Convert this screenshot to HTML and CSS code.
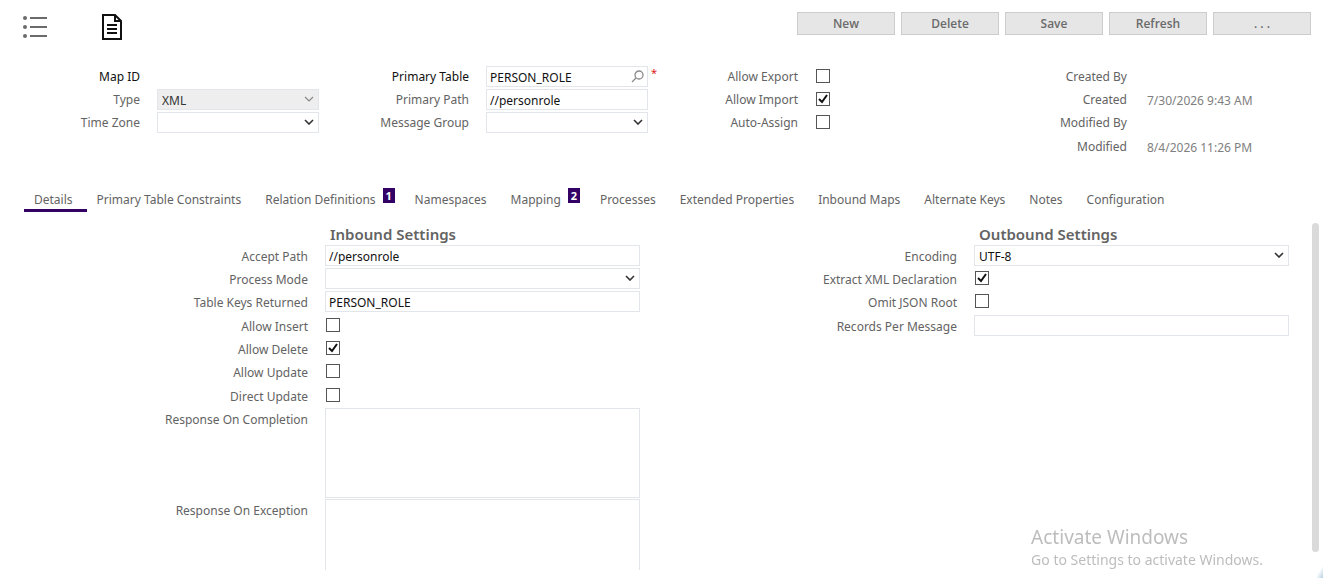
FILE: index.html
```html
<!DOCTYPE html>
<html lang="en">
<head>
  <meta charset="UTF-8">
  <title>Integration Map</title>
  <meta name="viewport" content="width=device-width, initial-scale=1.0">
  <link rel="stylesheet" href="styles.css">
</head>
<body>
  <header class="toolbar">
    <div class="views">
      <button class="icon-btn" type="button" aria-label="List view">
        <svg width="26" height="28" viewBox="0 0 26 28">
          <g fill="#6b6b6b">
            <circle cx="3" cy="6" r="2"/><circle cx="3" cy="15" r="2"/><circle cx="3" cy="24" r="2"/>
            <rect x="8" y="5" width="17" height="2"/><rect x="8" y="14" width="17" height="2"/><rect x="8" y="23" width="17" height="2"/>
          </g>
        </svg>
      </button>
      <button class="icon-btn" type="button" aria-label="Record view">
        <svg width="22" height="28" viewBox="0 0 22 28">
          <path d="M2 3h12l6 6v18H2z" fill="none" stroke="#111" stroke-width="2"/>
          <path d="M14 3v6h6" fill="none" stroke="#111" stroke-width="2"/>
          <path d="M6 13h10M6 17h10M6 21h10" stroke="#111" stroke-width="2"/>
        </svg>
      </button>
    </div>
    <div class="actions">
      <button class="btn" type="button">New</button>
      <button class="btn" type="button">Delete</button>
      <button class="btn" type="button">Save</button>
      <button class="btn" type="button">Refresh</button>
      <button class="btn" type="button">. . .</button>
    </div>
  </header>

  <section class="summary">
    <div class="col">
      <div class="row"><span class="label strong">Map ID</span></div>
      <div class="row">
        <label class="label" for="type">Type</label>
        <div class="select disabled">
          <select class="field" id="type" disabled><option>XML</option></select>
          <svg class="chevron" viewBox="0 0 10 6"><path d="M1 1l4 4 4-4"/></svg>
        </div>
      </div>
      <div class="row">
        <label class="label" for="timeZone">Time Zone</label>
        <div class="select">
          <select class="field" id="timeZone"><option></option></select>
          <svg class="chevron" viewBox="0 0 10 6"><path d="M1 1l4 4 4-4"/></svg>
        </div>
      </div>
    </div>
    <div class="col">
      <div class="row">
        <label class="label strong" for="primaryTable">Primary Table</label>
        <div class="lookup">
          <input class="field" id="primaryTable" type="text" value="PERSON_ROLE">
          <svg class="search" viewBox="0 0 14 14"><circle cx="8" cy="5" r="4"/><path d="M5 8l-4 4"/></svg>
          <span class="required">*</span>
        </div>
      </div>
      <div class="row">
        <label class="label" for="primaryPath">Primary Path</label>
        <input class="field" id="primaryPath" type="text" value="//personrole">
      </div>
      <div class="row">
        <label class="label" for="messageGroup">Message Group</label>
        <div class="select">
          <select class="field" id="messageGroup"><option></option></select>
          <svg class="chevron" viewBox="0 0 10 6"><path d="M1 1l4 4 4-4"/></svg>
        </div>
      </div>
    </div>
    <div class="col">
      <div class="row"><label class="label" for="allowExport">Allow Export</label><input class="check" id="allowExport" type="checkbox"></div>
      <div class="row"><label class="label" for="allowImport">Allow Import</label><input class="check" id="allowImport" type="checkbox" checked></div>
      <div class="row"><label class="label" for="autoAssign">Auto-Assign</label><input class="check" id="autoAssign" type="checkbox"></div>
    </div>
    <div class="col">
      <div class="row"><span class="label">Created By</span></div>
      <div class="row"><span class="label">Created</span><span class="value">7/30/2026 9:43 AM</span></div>
      <div class="row"><span class="label">Modified By</span></div>
      <div class="row"><span class="label">Modified</span><span class="value">8/4/2026 11:26 PM</span></div>
    </div>
  </section>

  <nav class="tabs">
    <a class="tab active" href="#details">Details</a>
    <a class="tab" href="#constraints">Primary Table Constraints</a>
    <a class="tab" href="#relations">Relation Definitions<span class="badge">1</span></a>
    <a class="tab" href="#namespaces">Namespaces</a>
    <a class="tab" href="#mapping">Mapping<span class="badge">2</span></a>
    <a class="tab" href="#processes">Processes</a>
    <a class="tab" href="#extended">Extended Properties</a>
    <a class="tab" href="#inbound">Inbound Maps</a>
    <a class="tab" href="#keys">Alternate Keys</a>
    <a class="tab" href="#notes">Notes</a>
    <a class="tab" href="#configuration">Configuration</a>
  </nav>

  <main class="panel" id="details">
    <div class="settings">
      <section>
        <h2>Inbound Settings</h2>
        <div class="rows">
          <div class="row"><label class="label" for="acceptPath">Accept Path</label><input class="field" id="acceptPath" type="text" value="//personrole"></div>
          <div class="row">
            <label class="label" for="processMode">Process Mode</label>
            <div class="select">
              <select class="field" id="processMode"><option></option></select>
              <svg class="chevron" viewBox="0 0 10 6"><path d="M1 1l4 4 4-4"/></svg>
            </div>
          </div>
          <div class="row"><label class="label" for="tableKeys">Table Keys Returned</label><input class="field" id="tableKeys" type="text" value="PERSON_ROLE"></div>
          <div class="row"><label class="label" for="allowInsert">Allow Insert</label><input class="check" id="allowInsert" type="checkbox"></div>
          <div class="row"><label class="label" for="allowDelete">Allow Delete</label><input class="check" id="allowDelete" type="checkbox" checked></div>
          <div class="row"><label class="label" for="allowUpdate">Allow Update</label><input class="check" id="allowUpdate" type="checkbox"></div>
          <div class="row"><label class="label" for="directUpdate">Direct Update</label><input class="check" id="directUpdate" type="checkbox"></div>
          <div class="row tall"><label class="label" for="onCompletion">Response On Completion</label><textarea class="field" id="onCompletion"></textarea></div>
          <div class="row tall"><label class="label" for="onException">Response On Exception</label><textarea class="field" id="onException"></textarea></div>
        </div>
      </section>
      <section>
        <h2>Outbound Settings</h2>
        <div class="rows">
          <div class="row">
            <label class="label" for="encoding">Encoding</label>
            <div class="select">
              <select class="field" id="encoding"><option>UTF-8</option></select>
              <svg class="chevron" viewBox="0 0 10 6"><path d="M1 1l4 4 4-4"/></svg>
            </div>
          </div>
          <div class="row"><label class="label" for="xmlDeclaration">Extract XML Declaration</label><input class="check" id="xmlDeclaration" type="checkbox" checked></div>
          <div class="row"><label class="label" for="omitRoot">Omit JSON Root</label><input class="check" id="omitRoot" type="checkbox"></div>
          <div class="row"><label class="label" for="recordsPer">Records Per Message</label><input class="field" id="recordsPer" type="text"></div>
        </div>
      </section>
    </div>
    <div class="scrollbar"><div class="thumb"></div></div>
  </main>

  <div class="watermark">
    <div class="watermark-title">Activate Windows</div>
    <div>Go to Settings to activate Windows.</div>
  </div>
  <div class="corner"></div>
</body>
</html>
```

FILE: styles.css
```css
* { box-sizing: border-box; }
body { display: flex; flex-direction: column; height: 100vh; margin: 0; padding-bottom: 8px; overflow: hidden; background: #fff; color: #636363; font: 12px/18px "Noto Sans", "Open Sans", sans-serif; }
button, input, select, textarea { font: inherit; }

/* toolbar */
.toolbar { display: flex; justify-content: space-between; padding: 12px 12px 0 22px; height: 66px; }
.views { display: flex; gap: 53px; }
.icon-btn { height: 28px; padding: 0; border: 0; background: none; }
.icon-btn svg { display: block; }
.actions { display: flex; gap: 6px; }
.btn { width: 98px; height: 23px; padding: 0; border: 1px solid #cdcdcd; background: #e6e6e6; color: #6b6b6b; font-family: "Open Sans", sans-serif; font-size: 12px; font-weight: 600; }

/* label + field rows */
.row { display: flex; height: 23px; }
.row:nth-child(3n) { height: 24px; }
.label { flex: none; width: 140px; margin-right: 17px; padding-top: 2px; text-align: right; white-space: nowrap; }
.strong { color: #111; }
.value { padding: 3px 0 0 3px; color: #808080; }
.field { display: block; width: 100%; height: 21px; margin: 0; padding: 1px 3px 0; border: 1px solid #e2e6ea; border-radius: 0; outline: 0; background: #fff; color: #111; resize: none; }
.select, .lookup { position: relative; flex: 1; }
.select .field { padding: 2px 4px 0; appearance: none; }
.select .field:disabled { background: #eee; color: #333; opacity: 1; }
.chevron { position: absolute; top: 7px; right: 5px; width: 10px; height: 6px; fill: none; stroke: #333; stroke-width: 1.6; pointer-events: none; }
.disabled .chevron { stroke: #888; stroke-width: 1.2; }
.search { position: absolute; top: 4px; right: 3px; width: 14px; height: 14px; fill: none; stroke: #8a8a8a; stroke-width: 1.3; }
.required { position: absolute; top: -2px; right: -9px; color: #e02020; font-size: 11px; }
.check { flex: none; width: 14px; height: 14px; margin: 3px 0 0 1px; border: 1px solid #555; background: #fff; appearance: none; }
.check:checked { background: url("data:image/svg+xml,%3Csvg xmlns='http://www.w3.org/2000/svg' viewBox='0 0 12 12'%3E%3Cpath d='M2 6l3 3 5-7' fill='none' stroke='%23111' stroke-width='2'/%3E%3C/svg%3E"); }

.summary { display: grid; grid-template-columns: repeat(4, 1fr); padding-right: 7px; height: 121px; }
.summary .field { max-width: 162px; }
.summary .select, .summary .lookup { max-width: 162px; }

/* tabs */
.tabs { display: flex; padding-left: 24px; height: 25px; }
.tab { display: flex; height: 25px; padding: 4px 14px 0 10px; color: inherit; text-decoration: none; white-space: nowrap; }
.active { border-bottom: 3px solid #330066; }
.badge { width: 12px; height: 15px; margin: -3px -4px 0 7px; background: #330066; color: #fff; font-size: 11px; font-weight: 700; line-height: 15px; text-align: center; }

/* details */
.panel { display: flex; flex: 1; min-height: 0; overflow: hidden; }
.settings { display: grid; flex: 1; grid-template-columns: repeat(2, 1fr); }
.settings section { padding-right: 9px; }
.settings .label { width: 308px; padding-top: 3px; }
h2 { height: 33px; margin: 0 0 0 330px; padding-top: 12px; font-size: 15px; font-weight: 600; line-height: 20px; }
.tall.row { height: 91px; }
.tall .field { height: 90px; }
.scrollbar { width: 25px; padding: 11px 4px 18px 14px; }
.thumb { height: 100%; border-radius: 4px; background: #dadada; }

.watermark { position: fixed; right: 60px; bottom: 8px; color: #bdbdbd; font-size: 14px; line-height: 20px; }
.watermark-title { font-size: 19px; line-height: 26px; }
.corner { position: fixed; right: 0; bottom: 0; width: 6px; height: 12px; background: linear-gradient(120deg, #fff 40%, #b5cfe2); }
```
